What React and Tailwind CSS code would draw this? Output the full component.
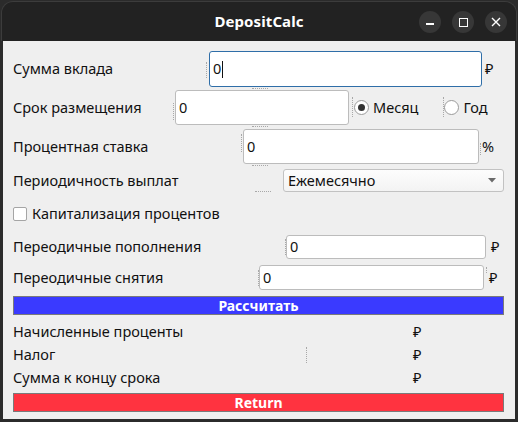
import React from "react";

const font = { fontFamily: '"Noto Sans", "DejaVu Sans", sans-serif' };

function Input({ w, h, focused, children }) {
  return (
    <div
      className={`flex items-center bg-white rounded-[3px] pl-[3px] text-[14.5px] text-[#111] ${
        focused ? "border border-[#2f6ea8]" : "border border-[#bcbcbc]"
      } ${w} ${h}`}
    >
      {children}
    </div>
  );
}

function VDot({ className }) {
  return <span className={`absolute w-0 border-l border-dotted border-[#a8a8a8] ${className}`} />;
}
function HDot({ className }) {
  return <span className={`absolute h-0 border-t border-dotted border-[#a8a8a8] ${className}`} />;
}

function Radio({ checked }) {
  return (
    <span className="w-[15px] h-[15px] rounded-full border border-[#9a9a9a] bg-white flex items-center justify-center shrink-0">
      {checked && <span className="w-[7px] h-[7px] rounded-full bg-[#333]" />}
    </span>
  );
}

export default function App() {
  return (
    <div className="w-[518px] h-[422px] bg-[#2b2b2b] flex flex-col overflow-hidden text-[#111]" style={font}>
      {/* title bar */}
      <div className="h-[40px] mx-[1px] mt-[1px] bg-[#222222] rounded-t-[12px] border-t border-x border-[#3c3c3c] relative flex items-center justify-center shrink-0">
        <span className="text-white font-bold text-[15px] tracking-[0.1px]">DepositCalc</span>
        <div className="absolute right-[9px] top-[9px] flex gap-[11px]">
          <span className="w-[22px] h-[22px] rounded-full bg-[#373737] flex items-center justify-center">
            <span className="w-[8px] h-[1.5px] bg-white mt-[4px]" />
          </span>
          <span className="w-[22px] h-[22px] rounded-full bg-[#373737] flex items-center justify-center">
            <span className="w-[9px] h-[9px] border border-white" />
          </span>
          <span className="w-[22px] h-[22px] rounded-full bg-[#373737] flex items-center justify-center">
            <svg width="10" height="10" viewBox="0 0 10 10">
              <path d="M1 1L9 9M9 1L1 9" stroke="white" strokeWidth="1.4" />
            </svg>
          </span>
        </div>
      </div>

      {/* content */}
      <div className="mx-[3px] h-[379px] -mt-[1px] bg-[#efefef] flex flex-col pl-[10px] text-[14.5px] shrink-0">
        {/* row1 */}
        <div className="relative mt-[11px] h-[36px] flex items-center">
          <span className="w-[196px] shrink-0">Сумма вклада</span>
          <Input w="w-[273px]" h="h-[36px]" focused>
            <span>0</span>
            <span className="w-[1px] h-[17px] bg-[#111] ml-[1px]" />
          </Input>
          <span className="ml-[3px]">₽</span>
          <VDot className="left-[193px] top-[11px] h-[16px]" />
          <HDot className="left-[239px] top-[37px] w-[16px]" />
        </div>
        {/* row2 */}
        <div className="relative mt-[3px] h-[35px] flex items-center">
          <span className="w-[162px] shrink-0">Срок размещения</span>
          <Input w="w-[174px]" h="h-[35px]">0</Input>
          <span className="ml-[5px] flex items-center">
            <Radio checked />
            <span className="ml-[4px]">Месяц</span>
          </span>
          <span className="ml-[26px] flex items-center">
            <Radio />
            <span className="ml-[4px]">Год</span>
          </span>
          <VDot className="left-[160px] top-[13px] h-[17px]" />
          <VDot className="left-[339px] top-[7px] h-[20px]" />
          <VDot className="left-[430px] top-[7px] h-[20px]" />
          <HDot className="left-[239px] top-[36px] w-[16px]" />
        </div>
        {/* row3 */}
        <div className="relative mt-[4px] h-[35px] flex items-center">
          <span className="w-[230px] shrink-0">Процентная ставка</span>
          <Input w="w-[236px]" h="h-[35px]">0</Input>
          <span className="ml-[3px]">%</span>
          <VDot className="left-[228px] top-[5px] h-[18px]" />
          <VDot className="left-[467px] top-[14px] h-[12px]" />
          <HDot className="left-[239px] top-[36px] w-[16px]" />
        </div>
        {/* row4 combo */}
        <div className="relative mt-[5px] h-[23px] flex items-center">
          <span className="w-[270px] shrink-0">Периодичность выплат</span>
          <div className="w-[221px] h-[23px] rounded-[3px] border border-[#c2c2c2] bg-gradient-to-b from-[#fdfdfd] to-[#f3f3f3] flex items-center pl-[4px] pr-[7px] justify-between">
            <span>Ежемесячно</span>
            <svg width="8" height="5" viewBox="0 0 8 5">
              <path d="M0 0H8L4 4.5Z" fill="#6a6a6a" />
            </svg>
          </div>
          <HDot className="left-[242px] top-[22px] w-[16px]" />
        </div>
        {/* checkbox */}
        <div className="mt-[11px] h-[22px] flex items-center">
          <span className="w-[14px] h-[14px] border border-[#a5a5a5] bg-white rounded-[2px] shrink-0" />
          <span className="ml-[5px]">Капитализация процентов</span>
        </div>
        {/* row6 */}
        <div className="relative mt-[10px] h-[24px] flex items-center">
          <span className="w-[273px] shrink-0">Переодичные пополнения</span>
          <Input w="w-[200px]" h="h-[24px]">0</Input>
          <span className="ml-[5px]">₽</span>
          <VDot className="left-[272px] top-[4px] h-[16px]" />
        </div>
        {/* row7 */}
        <div className="relative mt-[6px] h-[25px] flex items-center">
          <span className="w-[246px] shrink-0">Переодичные снятия</span>
          <Input w="w-[225px]" h="h-[25px]">0</Input>
          <span className="ml-[5px]">₽</span>
          <VDot className="left-[245px] top-[5px] h-[16px]" />
          <VDot className="left-[473px] top-[2px] h-[6px]" />
        </div>
        {/* calc button */}
        <div className="mt-[6px] w-[491px] h-[19px] bg-[#3a3aff] border border-[#7a7a7a] flex items-center justify-center text-white font-bold text-[14px]">
          Рассчитать
        </div>
        {/* results */}
        <div className="mt-[5px] h-[23px] flex items-center">
          <span className="w-[400px] shrink-0">Начисленные проценты</span>
          <span>₽</span>
        </div>
        <div className="relative h-[23px] flex items-center">
          <span className="w-[400px] shrink-0">Налог</span>
          <span>₽</span>
          <VDot className="left-[293px] top-[4px] h-[16px]" />
        </div>
        <div className="h-[23px] flex items-center">
          <span className="w-[400px] shrink-0">Сумма к концу срока</span>
          <span>₽</span>
        </div>
        {/* return button */}
        <div className="mt-[4px] w-[491px] h-[19px] bg-[#ff3340] border border-[#7a7a7a] flex items-center justify-center text-white font-bold text-[14px]">
          Return
        </div>
      </div>
    </div>
  );
}
